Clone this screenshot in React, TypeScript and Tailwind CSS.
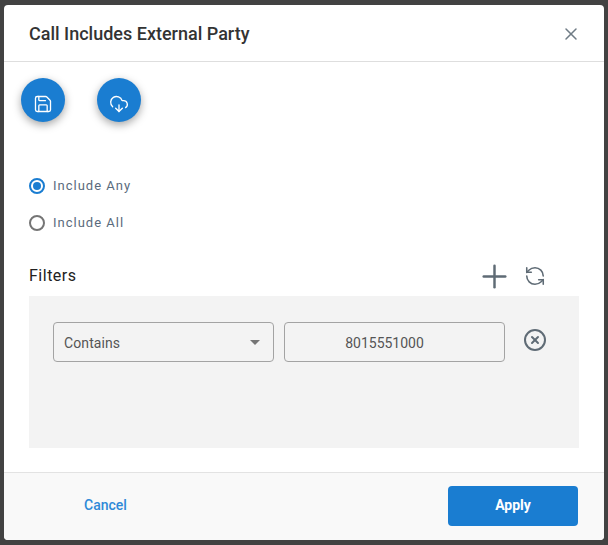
import { Plus, RefreshCcw, Save, CloudDownload, CircleX, X } from "lucide-react";

function Radio({ label, checked }: { label: string; checked?: boolean }) {
  return (
    <div className="flex items-center h-5 gap-2">
      <span
        className={
          "w-4 h-4 rounded-full border-2 flex items-center justify-center " +
          (checked ? "border-[#1a7dd1]" : "border-[#757575]")
        }
      >
        {checked && <span className="w-2 h-2 rounded-full bg-[#1a7dd1]" />}
      </span>
      <span className="text-[13px] tracking-[1px] text-[#5a6b7d]">{label}</span>
    </div>
  );
}

function Fab({ children }: { children: React.ReactNode }) {
  return (
    <button className="w-11 h-11 rounded-full bg-[#1a7dd1] text-white flex items-center justify-center shadow-[0_3px_8px_rgba(0,0,0,0.35)]">
      {children}
    </button>
  );
}

export default function App() {
  return (
    <div className="w-[608px] h-[545px] bg-[#424242] pt-[5px] pl-1 font-['Roboto',sans-serif] antialiased">
      <div className="w-[600px] h-[535px] bg-white rounded flex flex-col overflow-hidden">
        <header className="h-[57px] shrink-0 border-b border-[#dedede] pl-[25px] pr-[23px] flex items-center justify-between">
          <h1 className="text-[18px] font-medium text-[#333333]">Call Includes External Party</h1>
          <X size={20} strokeWidth={1.8} className="text-[#6f7b85] mt-[2px]" />
        </header>
        <main className="flex-1 flex flex-col">
          <div className="flex gap-8 pl-[17px] pt-4">
            <Fab><Save size={20} strokeWidth={1.6} className="mt-[7px]" /></Fab>
            <Fab><CloudDownload size={20} strokeWidth={1.6} className="mt-[7px]" /></Fab>
          </div>
          <div className="flex flex-col gap-[17px] pl-[25px] mt-[54px]">
            <Radio label="Include Any" checked />
            <Radio label="Include All" />
          </div>
          <div className="flex items-center justify-between pl-[25px] mt-[31px] h-6 pr-[58px]">
            <span className="text-[16px] text-[#212121] tracking-[0.5px]">Filters</span>
            <div className="flex items-center gap-[11px]">
              <Plus size={37} strokeWidth={1.6} className="text-[#5f6b75]" />
              <RefreshCcw size={22} strokeWidth={1.7} className="text-[#5f6b75]" />
            </div>
          </div>
          <div className="ml-[25px] mt-2 w-[550px] h-[152px] bg-[#f3f3f3] pl-6 pt-[26px] flex items-start gap-[10px]">
            <div className="w-[221px] h-10 rounded border border-[#a3a3a3] flex items-center justify-between pl-[10px] pr-[13px]">
              <span className="text-[14px] text-[#555555] tracking-[0.1px] pt-[2px]">Contains</span>
              <span className="w-0 h-0 border-x-[5px] border-x-transparent border-t-[5px] border-t-[#757575]" />
            </div>
            <div className="w-[221px] h-10 rounded border border-[#a3a3a3] flex items-center justify-center pr-5">
              <span className="text-[14px] text-[#555555] pt-[2px]">8015551000</span>
            </div>
            <CircleX size={24} strokeWidth={2} className="text-[#5f6b75] ml-[8px] mt-[6px]" />
          </div>
        </main>
        <footer className="h-[68px] shrink-0 border-t border-[#e3e3e3] bg-[#f9f9f9] pl-[80px] pr-[26px] pb-[2px] flex items-center justify-between">
          <span className="text-[14px] font-medium text-[#2f8ad8]">Cancel</span>
          <button className="w-[130px] h-10 rounded bg-[#1a7dd1] text-white text-[14px] font-bold">Apply</button>
        </footer>
      </div>
    </div>
  );
}
